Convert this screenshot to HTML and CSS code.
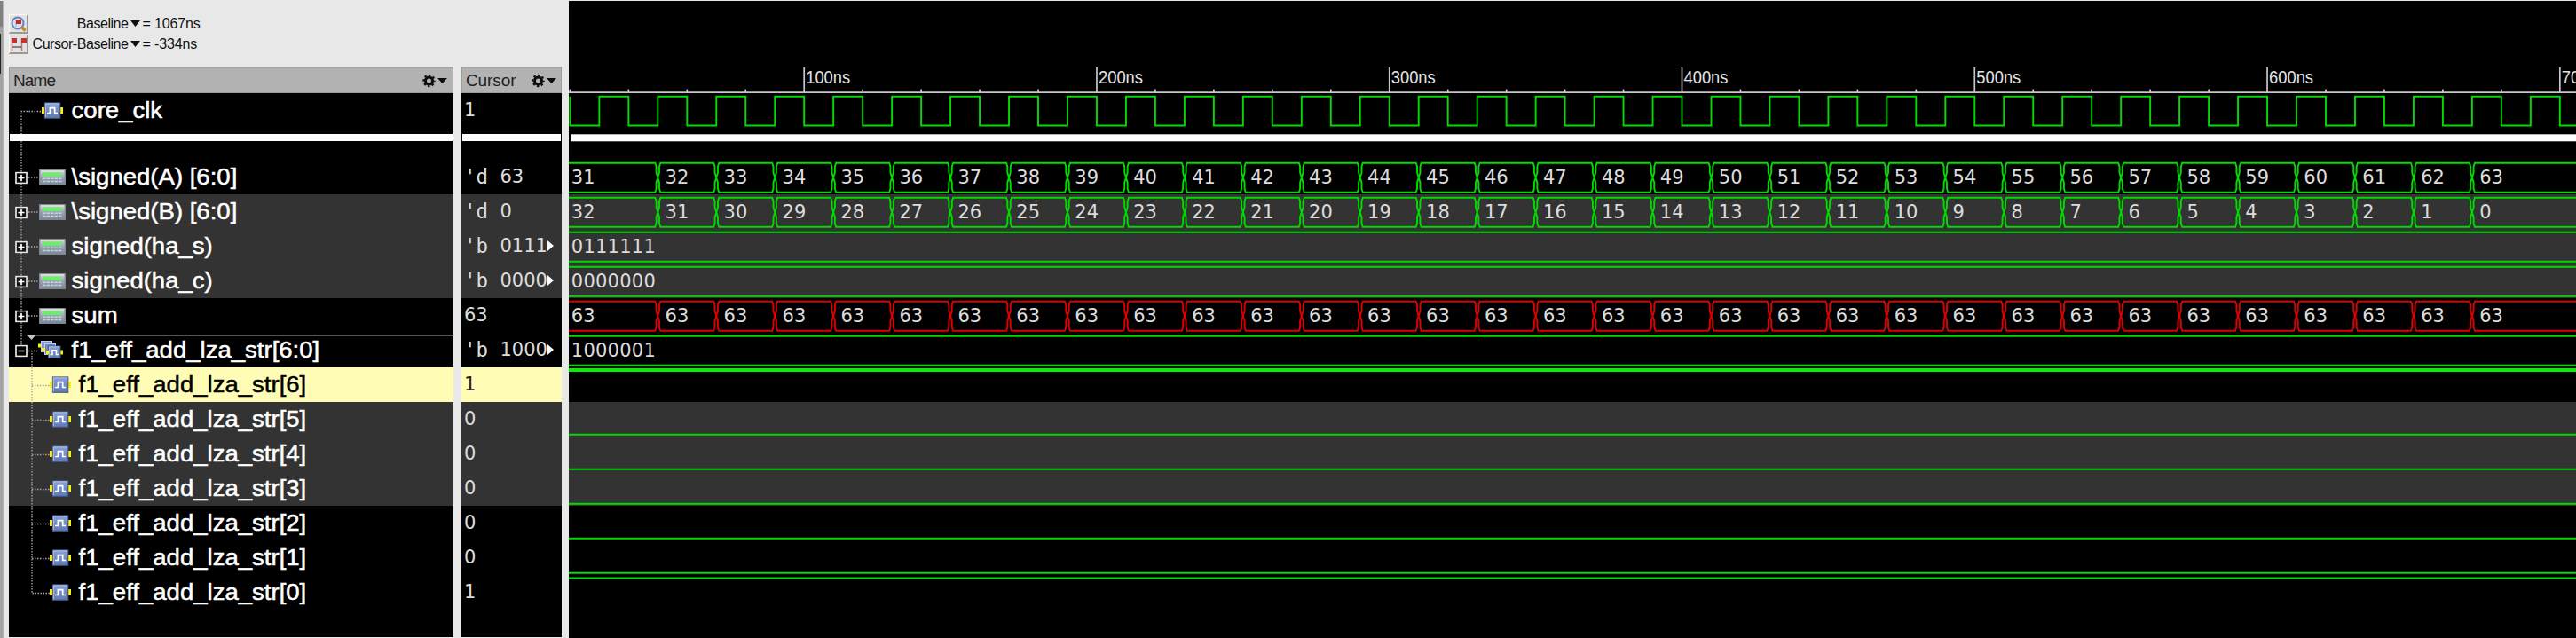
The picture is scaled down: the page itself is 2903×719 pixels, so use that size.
FILE: index.html
```html
<!DOCTYPE html>
<html lang="en">
<head>
<meta charset="utf-8">
<title>Waveform</title>
<link rel="stylesheet" href="styles.css">
</head>
<body>
<svg class="defs" width="0" height="0">
  <defs>
    <linearGradient id="blue" x1="0" y1="0" x2="0" y2="1"><stop offset="0" stop-color="#8ba2d8"/><stop offset="1" stop-color="#6079b4"/></linearGradient>
    <linearGradient id="steel" x1="0" y1="0" x2="0" y2="1"><stop offset="0" stop-color="#d4d8d6"/><stop offset="0.5" stop-color="#9aa6b4"/><stop offset="1" stop-color="#77879a"/></linearGradient>
    <symbol id="signal" viewBox="0 0 24 18" width="24" height="18" overflow="visible">
      <path d="M0 5.5h3v7H0zM21 5.5h3v7h-3z" fill="#fff200"/>
      <rect x="3.4" y=".4" width="17.4" height="17.4" fill="url(#blue)" stroke="#405588" stroke-width="1"/>
      <path d="M4.3 16.8V1.4h15.4" fill="none" stroke="#b3c3ea" stroke-width="1"/>
      <path d="M6 12h3.4V6.2h5.3V12H18" fill="none" stroke="#fff" stroke-width="1.7"/>
    </symbol>
    <symbol id="bus" viewBox="0 0 28 20" width="28" height="20" overflow="visible">
      <path d="M0 3.5h4v4H0zM4 7h4v4H4zM8.500 10.500h4v5h-4zM25 10.500h3v5h-3z" fill="#fff200"/>
      <rect x="3.500" y=".5" width="12" height="12" fill="#7f97d0" stroke="#c3cee8"/>
      <rect x="7.500" y="3.500" width="12" height="12" fill="#6e87c4" stroke="#c3cee8"/>
      <path d="M4 8h4v3H4z" fill="#fff200"/>
      <rect x="11.500" y="6" width="13.500" height="13.500" fill="url(#blue)" stroke="#405588"/>
      <path d="M12.300 18.500V6.900h12" fill="none" stroke="#b3c3ea"/>
      <path d="M9 11h3v4H9z" fill="#fff200"/>
      <path d="M13.500 15.500h2.500V10.800h4.500v4.700H23" fill="none" stroke="#fff" stroke-width="1.600"/>
    </symbol>
    <symbol id="calc" viewBox="0 0 30 18" width="30" height="18">
      <rect x=".7" y=".7" width="28.600" height="16.600" fill="url(#steel)" stroke="#858b90" stroke-width="1.300"/>
      <path d="M2 1.900h26" stroke="#e8e8e8" stroke-width="1.200"/>
      <rect x="4" y="3.600" width="21.500" height="4.200" fill="#6aef68"/>
      <path d="M4 10.300h22M4 13.500h22" stroke="#c9d2dc" stroke-width="1.500" stroke-dasharray="3.500 1"/>
    </symbol>
    <symbol id="box" viewBox="0 0 14 14" width="14" height="14"><rect x="1" y="1" width="12" height="12" fill="#000" fill-opacity=".6" stroke="#e6e6e6" stroke-width="1.700"/><path d="M3.500 7h7" stroke="#fff" stroke-width="1.700"/></symbol>
    <symbol id="gear" viewBox="0 0 28 16" width="28" height="16">
      <circle cx="7.500" cy="8" r="4" fill="none" stroke="#0c0c0c" stroke-width="3"/>
      <circle cx="7.500" cy="8" r="6.200" fill="none" stroke="#0c0c0c" stroke-width="2" stroke-dasharray="2.430 2.440" stroke-dashoffset="1.200"/>
      <path d="M17 5h11l-5.500 6z" fill="#0c0c0c"/>
    </symbol>
    <g id="treeCalc" class="tree">
      <path d="M14 0v39M22 20h12"/>
      <use href="#box" x="7" y="13.500"/><path class="plus" d="M14 17v7"/>
      <use href="#calc" x="34" y="11"/>
    </g>
    <g id="treeBit" class="tree"><path d="M26 0v39M26 20.500h21"/><use href="#signal" x="46" y="10.500"/></g>
    <g id="treeEnd" class="tree"><path d="M26 0v20.500h21"/><use href="#signal" x="46" y="10.500"/></g>
  </defs>
</svg>
<main class="app">
  <div class="edge"><i></i><b></b></div>
  <section class="side">
    <div class="info">
      <div class="info-row">
        <span class="tool"><svg width="18" height="18" viewBox="0 0 18 18"><circle cx="8" cy="8" r="6.500" fill="#d6e0ee" stroke="#6683b4" stroke-width="2"/><path d="M6 12V4" stroke="#aaa"/><path d="M6 4h6v5H6z" fill="#c12a2a"/><path d="M12.500 12.500l4 4" stroke="#c88a20" stroke-width="3.500"/></svg></span>
        <span class="label">Baseline</span><svg class="drop" width="11" height="7"><path d="M0 0h11L5.500 7z"/></svg><span class="val">= 1067ns</span>
      </div>
      <div class="info-row">
        <span class="tool"><svg width="18" height="18" viewBox="0 0 18 18"><path d="M1.500 2v14M12.500 2v14" stroke="#c87070" stroke-width="1.500"/><path d="M2 12h10" stroke="#444" stroke-width="1.200"/><path d="M1 2h6v5H1zM12 2h6v5h-6z" fill="#c23434"/></svg></span>
        <span class="label">Cursor-Baseline</span><svg class="drop" width="11" height="7"><path d="M0 0h11L5.500 7z"/></svg><span class="val">= -334ns</span>
      </div>
    </div>
    <div class="panels">
      <div class="panel names">
        <div class="head"><span>Name</span><svg width="28" height="16"><use href="#gear"/></svg></div>
        <div class="row"><svg class="t"><g class="tree"><path d="M14 39V20.500h23"/></g><use href="#signal" x="37" y="10.500"/></svg><span class="n">core_clk</span></div>
        <div class="split"><svg width="16" height="36"><g class="tree"><path d="M14 0v36"/></g></svg><div class="bar"></div></div>
        <div class="row"><svg class="t"><use href="#treeCalc"/></svg><span class="n">\signed(A) [6:0]</span></div>
        <div class="row alt"><svg class="t"><use href="#treeCalc"/></svg><span class="n">\signed(B) [6:0]</span></div>
        <div class="row alt"><svg class="t"><use href="#treeCalc"/></svg><span class="n">signed(ha_s)</span></div>
        <div class="row alt"><svg class="t"><use href="#treeCalc"/></svg><span class="n">signed(ha_c)</span></div>
        <div class="row"><svg class="t"><use href="#treeCalc"/></svg><span class="n">sum</span></div>
        <div class="row group"><svg class="t"><g class="tree"><path d="M14 0v14M22 20.500h11M26 20v19"/></g><use href="#box" x="7" y="13.500"/><path d="M20 2h11l-5.500 6z" fill="#c4c4c4"/><use href="#bus" x="33" y="9"/></svg><span class="n">f1_eff_add_lza_str[6:0]</span></div>
        <div class="row sel"><svg class="t c"><use href="#treeBit"/></svg><span class="n">f1_eff_add_lza_str[6]</span></div>
        <div class="row alt"><svg class="t c"><use href="#treeBit"/></svg><span class="n">f1_eff_add_lza_str[5]</span></div>
        <div class="row alt"><svg class="t c"><use href="#treeBit"/></svg><span class="n">f1_eff_add_lza_str[4]</span></div>
        <div class="row alt"><svg class="t c"><use href="#treeBit"/></svg><span class="n">f1_eff_add_lza_str[3]</span></div>
        <div class="row"><svg class="t c"><use href="#treeBit"/></svg><span class="n">f1_eff_add_lza_str[2]</span></div>
        <div class="row"><svg class="t c"><use href="#treeBit"/></svg><span class="n">f1_eff_add_lza_str[1]</span></div>
        <div class="row"><svg class="t c"><use href="#treeEnd"/></svg><span class="n">f1_eff_add_lza_str[0]</span></div>
      </div>
      <div class="panel values">
        <div class="head"><span>Cursor</span><svg width="28" height="16"><use href="#gear"/></svg></div>
        <div class="row">1</div>
        <div class="split"><div class="bar"></div></div>
        <div class="row"><span class="r">'d </span>63</div>
        <div class="row alt"><span class="r">'d </span>0</div>
        <div class="row alt"><span class="r">'b </span>0111<i class="more"></i></div>
        <div class="row alt"><span class="r">'b </span>0000<i class="more"></i></div>
        <div class="row">63</div>
        <div class="row"><span class="r">'b </span>1000<i class="more"></i></div>
        <div class="row sel">1</div>
        <div class="row alt">0</div>
        <div class="row alt">0</div>
        <div class="row alt">0</div>
        <div class="row">0</div>
        <div class="row">0</div>
        <div class="row">1</div>
      </div>
    </div>
  </section>
  <svg id="wave" class="wave" width="2262" height="718" viewBox="641 1 2262 718"></svg>
</main>
<script src="wave.js"></script>
</body>
</html>
```
FILE: styles.css
```css
* { box-sizing: border-box; }
body { margin: 0; background: #e8e8e8; overflow: hidden; font-family: "Liberation Sans", Arial, sans-serif; }
.defs { position: absolute; }
.app { display: flex; height: 719px; padding-top: 1px; }
.edge { width: 4px; background: #a3a3a3; border-right: 1px solid #b4b4b4; }
.edge i { display: block; height: 29px; background: #808080; }
.edge b { display: block; width: 1px; height: 45px; margin-top: 8px; background: #222; }
.side { flex: none; width: 637px; padding-left: 6px; }
.info { height: 74px; padding-top: 14px; }
.info-row { display: flex; align-items: center; height: 23px; font-size: 16px; color: #111; }
.tool { width: 22px; height: 22px; padding: 1px; background: #e2e2e2; border: 1px solid #f8f8f8; border-right: 2px solid #999; border-bottom: 2px solid #999; }
.tool svg { display: block; }
.label { width: 112.5px; text-align: right; letter-spacing: -0.45px; }
.drop { margin: 0 3px 0 2px; fill: #111; }
.val { letter-spacing: -0.15px; }
.panels { display: flex; gap: 9px; height: 644px; }
.panel { background: #000; color: #fff; height: 643px; overflow: hidden; }
.names { width: 501px; }
.values { width: 112.5px; }
.head { display: flex; align-items: center; justify-content: space-between; height: 30px; padding: 0 6px 0 4px; background: #b2b2b2; border: 1px solid #9c9c9c; border-top: 2px solid #a2a2a2; color: #222; font-size: 19px; }
.head span { letter-spacing: -0.9px; }
.values .head span { letter-spacing: -0.1px; }
.values .head { padding-left: 4px; padding-right: 5px; }
.row { display: flex; height: 39px; line-height: 39px; }
.alt { background: #333; }
.sel { background: #fffdb5; color: #000; }
.t { flex: none; width: 70px; height: 39px; }
.t.c { width: 78px; }
.n { font-size: 25.5px; white-space: pre; transform: scaleX(1.08); transform-origin: 0 0; -webkit-text-stroke: 0.5px currentColor; padding-left: 0.5px; }
.tree path { fill: none; stroke: #a8a8a8; stroke-width: 1.3; stroke-dasharray: 1.5 1.5; }
.tree .plus { stroke: #fff; stroke-width: 1.7; stroke-dasharray: none; }
.group { background: linear-gradient(#a9a9a9, #a9a9a9) 20px 2px / 481px 1.5px no-repeat; }
.split { display: flex; align-items: flex-start; height: 36px; position: relative; }
.bar { position: absolute; left: 1px; right: 1px; top: 7px; height: 8px; background: #fff; }
.values .row { font: 21px/39px "DejaVu Sans", sans-serif; color: #dcdcdc; padding-left: 3px; white-space: pre; }
.values .sel { color: #222; }
.r { font: 22.4px/39px "DejaVu Sans Mono", monospace; }
.more { width: 0; height: 0; margin-top: 13px; border: 6px solid transparent; border-left: 7px solid #fff; border-right: 0; }
.wave { display: block; flex: none; background: #000; }
.wave text { font-family: "DejaVu Sans", sans-serif; font-size: 21px; fill: #dcdcdc; }
.wave .tick { font-family: "Liberation Sans", Arial, sans-serif; font-size: 19.5px; fill: #e4e4e4; }
.trace { fill: none; stroke: #00dc00; stroke-width: 1.9; }
.trace.red { stroke: #dc0000; }
.trace.strong { stroke: #00f400; stroke-width: 4; }
.ruler { fill: none; stroke: #c9c5c9; stroke-width: 1.7; }
```
FILE: wave.js
```javascript
const wave = document.getElementById('wave');
const NS = 'http://www.w3.org/2000/svg';
const END = 2903;
const px = t => 906.2 + (t - 100) * 3.2977;

function add(tag, attrs, text) {
  const el = document.createElementNS(NS, tag);
  for (const key in attrs) el.setAttribute(key, attrs[key]);
  if (text !== undefined) el.textContent = text;
  wave.appendChild(el);
}

[219, 258, 297, 453, 492, 531].forEach(y => add('rect', { x: 641, y, width: 2262, height: 39, fill: '#333' }));

// time ruler
let ruler = 'M641 104.2H2903';
for (let t = 20; t <= 700; t += 20) ruler += `M${px(t)} ${t % 100 ? 100.5 : 76}V104`;
add('path', { d: ruler, class: 'ruler' });
for (let t = 100; t <= 700; t += 100) {
  add('text', { x: px(t) + 2, y: 93.5, class: 'tick', textLength: 50, lengthAdjust: 'spacingAndGlyphs' }, t + 'ns');
}

// clock
let clk = 'M642.4 108.7V141.5';
for (let t = 30; t <= 700; t += 20) clk += `H${px(t)}V108.7H${px(t + 10)}V141.5`;
add('path', { d: clk + 'H2903', class: 'trace' });
add('rect', { x: 643, y: 151.3, width: 2260, height: 8, fill: '#fff' });

// bus with a value change every 20ns from 50ns to 670ns
function bus(top, valueAt, cls) {
  const bottom = top + 33, mid = top + 16.5;
  let x0 = 641, up = `M${x0} ${top}`, down = `M${x0} ${bottom}`;
  add('text', { x: 643.8, y: top + 23.3 }, valueAt(0));
  for (let i = 1; i <= 32; i++) {
    const x = px(30 + 20 * i);
    up += `H${x - 3}L${x - 1.7} ${top + 4}V${top + 11}L${x} ${mid}L${x + 1.7} ${top + 11}V${top + 4}L${x + 3} ${top}`;
    down += `H${x - 3}L${x - 1.7} ${bottom - 4}V${bottom - 11}L${x} ${mid}L${x + 1.7} ${bottom - 11}V${bottom - 4}L${x + 3} ${bottom}`;
    add('text', { x: x + 8.3, y: top + 23.3 }, valueAt(i));
  }
  add('path', { d: up + `H${END}` + down + `H${END}`, class: cls });
}
bus(183.7, i => 31 + i, 'trace');
bus(222.7, i => 32 - i, 'trace');
bus(339.7, () => 63, 'trace red');

// buses that stay constant
[[261.7, '0111111'], [300.7, '0000000'], [378.7, '1000001']].forEach(([top, value]) => {
  add('path', { d: `M641 ${top}H${END}M641 ${top + 33}H${END}`, class: 'trace' });
  add('text', { x: 643.8, y: top + 23.3, textLength: 95 }, value);
});

// single bits
add('path', { d: `M641 417H${END}`, class: 'trace strong' });
[489.7, 528.7, 567.7, 606.7, 645.7, 651.5].forEach(y => add('path', { d: `M641 ${y}H${END}`, class: 'trace' }));
```
